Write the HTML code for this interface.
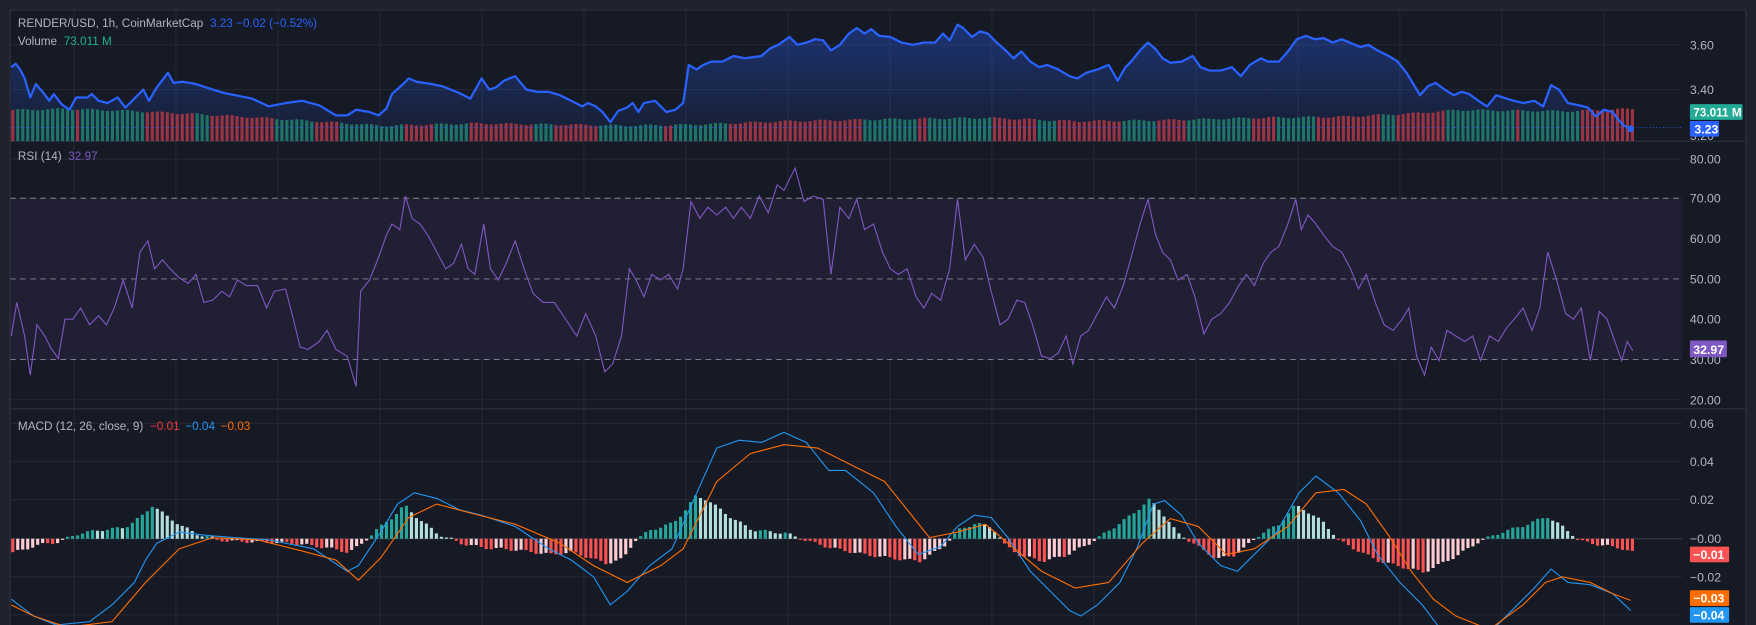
<!DOCTYPE html>
<html><head><meta charset="utf-8"><style>
html,body{margin:0;padding:0;background:#1e222d;overflow:hidden}
svg{display:block;font-family:"Liberation Sans",sans-serif}
</style></head><body>
<svg id="s" width="1756" height="625" viewBox="0 0 1568 558" preserveAspectRatio="none" xmlns="http://www.w3.org/2000/svg">
<rect x="0" y="0" width="1568" height="558" fill="#1e222d"/>
<rect x="9" y="9" width="1550" height="549" fill="#161a25"/>
<g id="grid" stroke="#232733" stroke-width="1"></g>
<rect x="9" y="177" width="1493" height="144" fill="#211f33"/>
<g stroke="#868993" stroke-dasharray="5,4" stroke-width="0.8">
<line x1="9" y1="177" x2="1502" y2="177"/><line x1="9" y1="249" x2="1502" y2="249"/><line x1="9" y1="321" x2="1502" y2="321"/></g>
<line x1="9" y1="126" x2="1559" y2="126" stroke="#2f3340"/>
<line x1="9" y1="365" x2="1559" y2="365" stroke="#2f3340"/>
<line x1="9" y1="9" x2="9" y2="558" stroke="#2f3340"/>
<line x1="1559" y1="9" x2="1559" y2="558" stroke="#2f3340"/>
<line x1="9" y1="9" x2="1559" y2="9" stroke="#2f3340"/>
<defs><linearGradient id="pg" x1="0" y1="0" x2="0" y2="1"><stop offset="0" stop-color="#2962ff" stop-opacity="0.35"/><stop offset="1" stop-color="#2962ff" stop-opacity="0.05"/></linearGradient>
<clipPath id="cp"><rect x="9" y="9" width="1493" height="117"/></clipPath><clipPath id="cm"><rect x="9" y="366" width="1493" height="192"/></clipPath></defs>
<path id="area" fill="url(#pg)" clip-path="url(#cp)"/>
<g id="vol" clip-path="url(#cp)"></g>
<line x1="9" y1="114" x2="1502" y2="114" stroke="#2962ff" stroke-dasharray="1,2" stroke-width="0.8"/>
<polyline id="price" fill="none" stroke="#2962ff" stroke-width="2" stroke-linejoin="round" clip-path="url(#cp)"/>
<circle cx="1456" cy="115" r="3" fill="#2962ff"/>
<polyline id="rsi" fill="none" stroke="#7e57c2" stroke-width="1"/>
<line x1="9" y1="481" x2="1502" y2="481" stroke="#363a45" stroke-width="0.8"/>
<g id="hist" clip-path="url(#cm)"></g>
<polyline id="macd" fill="none" stroke="#2196f3" stroke-width="1" clip-path="url(#cm)"/>
<polyline id="sig" fill="none" stroke="#ff6d00" stroke-width="1" clip-path="url(#cm)"/>
<g font-size="10.5" fill="#b2b5be">
<text x="16" y="24">RENDER/USD, 1h, CoinMarketCap <tspan fill="#2962ff" dx="3">3.23  −0.02 (−0.52%)</tspan></text>
<text x="16" y="40">Volume <tspan fill="#22ab94" dx="3">73.011 M</tspan></text>
<text x="16" y="143">RSI (14) <tspan fill="#7e57c2" dx="3">32.97</tspan></text>
<text x="16" y="384">MACD (12, 26, close, 9) <tspan fill="#f23645" dx="3">−0.01</tspan><tspan fill="#2196f3" dx="5">−0.04</tspan><tspan fill="#ff6d00" dx="5">−0.03</tspan></text>
</g>
<g font-size="11" fill="#b2b5be">
<text x="1509" y="44">3.60</text><text x="1509" y="84">3.40</text><text x="1509" y="125">3.20</text>
<text x="1509" y="146">80.00</text><text x="1509" y="181">70.00</text><text x="1509" y="217">60.00</text><text x="1509" y="253">50.00</text><text x="1509" y="289">40.00</text><text x="1509" y="325">30.00</text><text x="1509" y="361">20.00</text>
<text x="1509" y="382">0.06</text><text x="1509" y="416">0.04</text><text x="1509" y="450">0.02</text><text x="1509" y="485">−0.00</text><text x="1509" y="519">−0.02</text>
</g>
<g font-size="11" fill="#fff" font-weight="bold">
<rect x="1509" y="93" width="47" height="14" fill="#22ab94" rx="1"/><text x="1512" y="104" font-size="10.5">73.011 M</text>
<rect x="1509" y="108" width="26" height="14" fill="#2962ff" rx="1"/><text x="1513" y="119">3.23</text>
<rect x="1509" y="304" width="33" height="15" fill="#7e57c2" rx="1"/><text x="1512" y="316">32.97</text>
<rect x="1509" y="488" width="35" height="14" fill="#ff5252" rx="1"/><text x="1512" y="499">−0.01</text>
<rect x="1509" y="527" width="35" height="14" fill="#ff6d00" rx="1"/><text x="1512" y="538">−0.03</text>
<rect x="1509" y="542" width="35" height="14" fill="#2196f3" rx="1"/><text x="1512" y="553">−0.04</text>
</g>
</svg>
<script>
const NS="http://www.w3.org/2000/svg";
function el(t,a,p){const e=document.createElementNS(NS,t);for(const k in a)e.setAttribute(k,a[k]);document.getElementById(p).appendChild(e);return e;}
function pairs(a){const r=[];for(let i=0;i<a.length;i+=2)r.push([a[i],a[i+1]]);return r;}
function interp(P,x){for(let i=1;i<P.length;i++){if(x<=P[i][0]){const a=P[i-1],b=P[i];return a[1]+(b[1]-a[1])*(x-a[0])/(b[0]-a[0]);}}return P[P.length-1][1];}
for(let x=74/1.12;x<1502;x+=102/1.12){el('line',{x1:x,y1:9,x2:x,y2:558},'grid');}
[40,80,142,177,213,249,285,321,357,378,412,446,515,549].forEach(y=>el('line',{x1:9,y1:y,x2:1502,y2:y},'grid'));
const price=pairs([10,60,14,57,18,62,22,70,27,87,32,75,38,82,44,90,48,84,55,93,62,98,68,87,78,87,82,84,88,90,96,92,105,87,112,96,120,88,128,80,133,90,140,78,150,65,155,74,163,73,175,75,190,80,200,83,210,85,225,88,240,95,255,92,270,90,285,94,300,103,310,103,318,98,330,100,338,103,345,97,350,84,360,75,365,70,372,73,385,75,395,77,410,83,420,88,430,70,437,80,443,78,450,72,460,68,470,80,480,82,490,82,500,85,510,90,520,95,525,92,532,95,538,100,545,109,552,99,560,96,565,92,570,100,575,92,585,90,595,100,603,98,610,92,615,58,622,62,628,58,635,55,645,55,655,50,665,52,680,50,688,43,695,40,705,33,712,40,720,38,728,35,735,36,742,45,750,40,758,30,765,25,772,30,778,26,785,32,795,33,805,38,815,40,825,38,835,38,842,30,848,36,855,22,860,25,868,33,875,28,882,30,890,38,898,45,905,52,912,46,920,55,928,60,935,58,945,62,955,68,962,70,970,65,980,62,990,58,998,72,1005,60,1010,55,1018,45,1025,38,1032,44,1038,52,1045,56,1055,55,1065,50,1072,60,1080,63,1090,63,1100,60,1108,68,1116,58,1126,52,1132,55,1142,55,1150,46,1158,35,1166,32,1174,35,1182,34,1190,38,1198,35,1205,38,1215,42,1222,40,1230,45,1240,50,1248,55,1256,65,1262,75,1268,85,1275,77,1282,74,1290,80,1298,85,1305,82,1312,84,1320,90,1328,95,1336,85,1345,88,1352,90,1360,92,1370,90,1378,95,1385,76,1392,80,1400,92,1410,94,1418,96,1425,104,1432,98,1440,100,1445,107,1450,112,1456,115]);
const ps=price.map(p=>p.join(',')).join(' ');
document.getElementById('price').setAttribute('points',ps);
document.getElementById('area').setAttribute('d','M10,126 L'+ps.replace(/ /g,' L')+' L1456,126 Z');
const VH=pairs([10,27,60,28,120,26,200,22,280,17,340,13,420,15,500,14,560,13,620,14,700,17,800,19,880,20,960,17,1040,18,1120,20,1200,21,1260,24,1300,27,1400,26,1456,28]);
for(let x=10,i=0;x<1458;x+=4.45,i++){const h=interp(VH,x)+(Math.sin(i*0.9)+1)*0.8;const up=(Math.sin(i*0.37)+Math.sin(i*0.11))>0;
el('rect',{x:x,y:126-h,width:2.8,height:h,fill:up?'#1f7466':'#9a3442'},'vol');}
const rsi=[10,300,15,270,22,300,27,335,33,290,40,300,45,310,52,320,58,285,65,285,72,275,80,290,88,282,95,290,102,275,110,250,118,275,125,225,132,215,138,240,145,232,152,240,160,248,168,253,175,245,182,270,190,268,198,260,205,265,212,250,220,255,230,255,238,275,245,260,255,258,262,285,268,310,275,312,285,305,292,295,300,312,310,318,318,345,322,260,330,250,338,230,345,210,350,200,357,205,362,175,368,195,375,200,382,210,390,225,398,240,405,235,412,218,418,240,424,245,432,200,438,240,445,250,452,235,460,215,468,240,476,262,485,270,495,270,505,285,515,300,523,280,532,300,540,332,547,325,555,300,562,240,568,250,575,265,582,245,590,250,597,245,605,258,610,240,617,180,625,195,632,185,640,192,648,185,655,195,662,185,670,195,678,175,686,190,694,165,700,170,710,150,718,180,726,175,735,178,742,245,750,185,758,195,765,178,772,205,780,200,788,225,795,240,802,245,810,240,818,265,825,275,832,262,840,268,848,240,855,178,862,232,870,218,878,230,885,260,893,290,900,285,908,268,915,270,922,290,930,318,938,320,945,315,952,300,958,325,965,300,972,295,980,280,988,265,995,275,1003,255,1010,230,1018,200,1025,178,1032,210,1038,225,1045,232,1052,250,1060,245,1067,265,1075,298,1082,285,1090,280,1098,270,1106,255,1113,245,1120,255,1128,235,1135,225,1142,220,1150,200,1157,178,1162,205,1168,192,1175,200,1182,210,1190,220,1198,225,1206,240,1213,258,1220,245,1228,270,1236,290,1244,295,1252,285,1258,275,1265,318,1272,335,1278,310,1285,322,1292,295,1300,300,1308,305,1315,300,1322,322,1330,300,1338,305,1345,293,1352,285,1360,275,1368,295,1375,275,1382,225,1390,250,1398,280,1405,285,1412,275,1420,322,1428,278,1435,285,1442,305,1448,322,1453,305,1458,313];
document.getElementById('rsi').setAttribute('points',pairs(rsi).map(p=>p.join(',')).join(' '));
const H=pairs([10,-12,20,-10,30,-6,50,-3,70,5,90,8,110,10,125,20,135,30,145,22,160,12,175,4,200,-2,230,-3,260,-4,290,-8,310,-12,320,-6,335,8,350,20,360,30,370,20,390,4,410,-4,430,-8,460,-10,490,-14,510,-12,540,-22,555,-18,565,-2,580,8,600,14,610,25,620,38,630,35,650,20,670,8,700,5,720,-2,740,-8,770,-14,800,-18,820,-20,840,-8,855,8,870,14,885,10,895,-5,910,-15,930,-20,950,-15,970,-5,990,8,1010,22,1025,35,1035,25,1050,5,1070,-8,1085,-18,1100,-15,1110,-8,1125,5,1140,12,1155,30,1165,25,1180,15,1195,-2,1210,-10,1230,-20,1250,-25,1270,-30,1280,-25,1300,-15,1320,-2,1340,6,1360,12,1380,20,1395,10,1410,-2,1430,-6,1445,-8,1456,-12]);
let pv=null,i=0;
for(let x=10;x<1458;x+=4.45,i++){let v=interp(H,x)+Math.sin(i*1.3)*1.2;const c=v>=0?(pv===null||v>=pv?'#26a69a':'#b2dfdb'):(pv===null||v<=pv?'#ff5252':'#ffcdd2');
const h=Math.max(Math.abs(v),1);el('rect',{x:x,y:v>=0?481-h:481,width:2.8,height:h,fill:c},'hist');pv=v;}
const M=[10,535,30,550,50,558,80,555,100,540,120,520,130,500,140,485,160,475,185,478,210,480,240,482,280,490,310,510,320,505,340,475,355,450,370,440,390,445,410,455,430,460,460,470,490,490,510,500,530,515,545,540,560,528,580,505,600,490,620,445,640,400,660,393,680,395,700,386,720,395,740,420,755,420,780,440,800,470,820,495,840,488,855,470,870,460,885,462,900,480,920,510,940,530,955,545,965,550,980,540,1000,520,1015,490,1030,450,1040,447,1055,460,1070,485,1090,505,1105,510,1120,495,1140,475,1160,440,1175,425,1195,440,1215,465,1230,495,1250,520,1270,540,1285,560,1330,565,1370,525,1385,508,1400,520,1420,522,1440,530,1456,545];
const S=[10,540,30,550,60,560,100,555,130,520,160,490,190,480,230,482,270,492,300,500,320,518,340,498,365,462,390,450,420,458,460,468,500,485,530,505,560,520,590,505,610,490,640,430,670,405,700,397,730,400,760,415,790,430,810,455,830,480,855,475,880,468,900,485,930,510,960,525,990,520,1020,485,1045,463,1070,470,1095,495,1120,490,1150,470,1175,440,1200,437,1220,450,1240,478,1260,510,1280,535,1300,550,1330,562,1360,540,1380,520,1395,515,1420,520,1440,530,1456,536];
document.getElementById('macd').setAttribute('points',pairs(M).map(p=>p.join(',')).join(' '));
document.getElementById('sig').setAttribute('points',pairs(S).map(p=>p.join(',')).join(' '));
</script>
</body></html>
